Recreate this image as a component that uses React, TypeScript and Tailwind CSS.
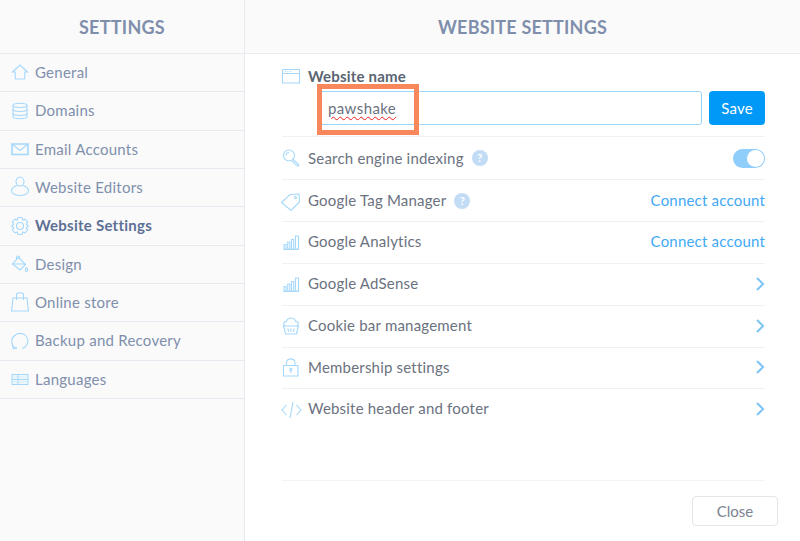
import type { ReactNode } from "react";

const icon = "w-[24px] h-[24px] shrink-0 fill-none stroke-[#a5d8fb] stroke-[1.1]";

const HomeIcon = () => (
  <svg viewBox="0 0 24 24" className={icon}>
    <path d="M4.500 12 12 5l7.500 7h-2.700v7H7.200v-7z" />
  </svg>
);
const DbIcon = () => (
  <svg viewBox="0 0 24 24" className={icon}>
    <path d="M5 6.500c0-3 14-3 14 0v11c0 3-14 3-14 0z" />
    <path d="M5 6.500c0 2.600 14 2.600 14 0M5 10.500c0 2.600 14 2.600 14 0M5 14.500c0 2.600 14 2.600 14 0" />
  </svg>
);
const MailIcon = () => (
  <svg viewBox="0 0 24 24" className={icon}>
    <path d="M4 7h16v10.500H4z" className="stroke-[1.6]" />
    <path d="m4 7 8 6.500L20 7" />
  </svg>
);
const UserIcon = () => (
  <svg viewBox="0 0 24 24" className={icon}>
    <ellipse cx="12" cy="6.500" rx="4" ry="4.500" />
    <path d="M9 10.500c-3 1-5.500 3-5.500 5.500 0 2.500 4.500 4.500 8.500 4.500s8.500-2 8.500-4.500c0-2.500-2.500-4.500-5.500-5.500" />
  </svg>
);
const GearIcon = () => (
  <svg viewBox="0 0 24 24" className={icon}>
    <path d="M10 3.500h4l.8 2.500 2.300-.8 2.500 2.800-1.300 2.200 2 1.800-2 1.800 1.300 2.200-2.500 2.800-2.300-.8-.8 2.500h-4l-.8-2.500-2.300.8-2.500-2.800 1.300-2.200-2-1.800 2-1.800-1.300-2.200 2.500-2.800 2.300.8z" />
    <circle cx="12" cy="12" r="3.500" />
  </svg>
);
const BucketIcon = () => (
  <svg viewBox="0 0 24 24" className={icon}>
    <path d="m10.500 5.500 7 7-5.500 5.500-7.500-6z" />
    <path d="M4.500 12h13M8.500 8V5.500c0-2 3-2 3 0V7" />
    <path d="M18.500 15.500c1 1.200 1.300 1.700 1.300 2.500a1.300 1.300 0 0 1-2.600 0c0-.8.300-1.300 1.300-2.500z" />
  </svg>
);
const BagIcon = () => (
  <svg viewBox="0 0 24 24" className={icon}>
    <path d="M5 8h14l1.500 13h-17z" />
    <path d="M8.500 10V4.500c0-2.400 7-2.400 7 0V10" />
  </svg>
);
const RestoreIcon = () => (
  <svg viewBox="0 0 24 24" className={icon}>
    <path d="M9 19.500c-6-1.500-6.500-9-3-12.500 3.500-3.500 9-3.500 12 0 3.500 4 2 11-4 12.500" />
    <path d="m4.500 16 .8 3.500 3.500-.6" />
  </svg>
);
const LangIcon = () => (
  <svg viewBox="0 0 24 24" className={icon}>
    <path d="M4 7.500h16v10H4zM4 12.500h16M10 7.500v10" />
    <path d="M11 8.500h8v3h-8zM11 13.500h8v3h-8zM5 8.500h4v3H5zM5 13.500h4v3H5z" className="fill-[#e2f3fe] stroke-none" />
  </svg>
);
const WindowIcon = () => (
  <svg viewBox="0 0 24 24" className={icon}>
    <path d="M3.500 5.500h17v13.500h-17zM3.500 9.500h17" />
    <path d="M6 7.500h1M8.500 7.500h1M11 7.500h1" />
  </svg>
);
const SearchIcon = () => (
  <svg viewBox="0 0 24 24" className={icon}>
    <circle cx="10" cy="9.500" r="5.500" />
    <path d="M7 9.500a3 3 0 0 1 3-3M14 13.500l5.500 5c.8 1-.5 2-1.300 1.300l-5.500-5" />
  </svg>
);
const TagIcon = () => (
  <svg viewBox="0 0 24 24" className={icon}>
    <path d="m2.500 13.500 8.500-8 9-.5.500 8-8.500 8.500z" />
    <circle cx="16.500" cy="8.500" r="1" />
  </svg>
);
const BarsIcon = () => (
  <svg viewBox="0 0 24 24" className={icon}>
    <path d="M5 14.500h2v4.500H5zM8.700 12h2.200v7H8.700zM12.500 9.500h2.200V19h-2.200zM16.500 6h3v13h-3zM4.500 19.500h15" />
  </svg>
);
const CookieIcon = () => (
  <svg viewBox="0 0 24 24" className={icon}>
    <path d="M6 12c-2.500-2-1-5 1.500-4.500C8 5 10 4 12 4s4 1 4.500 3.500C19 7 20.500 10 18 12" />
    <path d="M4.500 12h15l-2 8h-11zM9 14.500l.5 3.500M12 14.500V18M15 14.500l-.5 3.500" />
  </svg>
);
const LockIcon = () => (
  <svg viewBox="0 0 24 24" className={icon}>
    <path d="M4.500 10.500h14.500v10.500H4.500z" />
    <path d="M7.500 10.500V7.500a4.300 4.300 0 0 1 8.500 0v3" />
    <circle cx="11.800" cy="14.500" r="1.100" />
    <path d="M11.800 15.600V18" />
  </svg>
);
const CodeIcon = () => (
  <svg viewBox="0 0 24 24" className={icon}>
    <path d="M7.500 8 3 13l4.500 5M17.500 8l4.500 5-4.500 5M14 5l-3 16" />
  </svg>
);
const Chevron = () => (
  <svg viewBox="0 0 10 16" className="w-[10px] h-[16px] fill-none stroke-[#7cc5f5] stroke-[2]">
    <path d="m2 2 6 6-6 6" />
  </svg>
);
const Help = () => (
  <span className="w-[16px] h-[16px] rounded-full bg-[#c3dcf5] text-white text-[11px] font-bold leading-[16px] text-center">?</span>
);
const Connect = () => <span className="text-[15px] text-[#3fa9f5] tracking-[0.2px]">Connect account</span>;

const menu: [ReactNode, string][] = [
  [<HomeIcon />, "General"],
  [<DbIcon />, "Domains"],
  [<MailIcon />, "Email Accounts"],
  [<UserIcon />, "Website Editors"],
  [<GearIcon />, "Website Settings"],
  [<BucketIcon />, "Design"],
  [<BagIcon />, "Online store"],
  [<RestoreIcon />, "Backup and Recovery"],
  [<LangIcon />, "Languages"],
];

const rows: [ReactNode, string, boolean, ReactNode, string][] = [
  [<SearchIcon />, "Search engine indexing", true, (
    <span className="w-[32px] h-[19px] rounded-full bg-[#8fcdfa] flex justify-end items-center pr-[1px]">
      <span className="w-[17px] h-[17px] rounded-full bg-white" />
    </span>
  ), "h-[43px]"],
  [<TagIcon />, "Google Tag Manager", true, <span className="mb-[2px]"><Connect /></span>, "h-[42px]"],
  [<BarsIcon />, "Google Analytics", false, <Connect />, "h-[42px] pb-[2px]"],
  [<BarsIcon />, "Google AdSense", false, <Chevron />, "h-[42px] pb-[2px]"],
  [<CookieIcon />, "Cookie bar management", false, <Chevron />, "h-[42px] pb-[2px]"],
  [<LockIcon />, "Membership settings", false, <Chevron />, "h-[41px] pb-[2px]"],
  [<CodeIcon />, "Website header and footer", false, <Chevron />, "h-[41px] pb-[2px]"],
];

export default function App() {
  return (
    <div className="w-[800px] h-[541px] flex bg-white overflow-hidden font-['Lato',sans-serif]">
      {/* Sidebar */}
      <aside className="w-[245px] h-full shrink-0 bg-[#fafafb] border-r border-[#e6e9ee]">
        <h2 className="h-[54px] flex items-center justify-center border-b border-[#e9ecf1] text-[18px] font-bold text-[#7f8fab] tracking-[0.25px] pt-[1px]">
          SETTINGS
        </h2>
        {menu.map(([ic, label]) => (
          <div
            key={label}
            className={`h-[38.35px] pl-[8px] pb-[1px] flex items-center gap-[3px] border-b border-[#e6eaf0] text-[15px] tracking-[0.25px] ${
              label === "Website Settings" ? "font-bold text-[#5d7095]" : "text-[#7f8fab]"
            }`}
          >
            {ic}
            <span>{label}</span>
          </div>
        ))}
      </aside>

      {/* Main */}
      <main className="flex-1 flex flex-col">
        <h1 className="h-[54px] shrink-0 flex items-center justify-center bg-[#fafafb] border-b border-[#e9ecf1] text-[18px] font-bold text-[#7f8fab] tracking-[0.2px] pt-[1px]">
          WEBSITE SETTINGS
        </h1>
        <div className="ml-[37px] w-[483px] h-[83px] border-b border-[#f0f1f3] relative">
          <div className="flex items-center h-[24px] mt-[10px] -ml-[3px]">
            <div className="w-[29px] flex"><WindowIcon /></div>
            <span className="text-[15px] font-bold text-[#5b6472] tracking-[0.2px]">Website name</span>
          </div>
          <div className="flex gap-[7px] mt-[3px] ml-[36px]">
            <div className="w-[384px] h-[34px] border border-[#9ad5fb] rounded-[3px] flex items-center pl-[9px] text-[15px] text-[#6b7280] tracking-[0.4px]">
              <span className="underline decoration-wavy decoration-[#f02020] decoration-[1px] underline-offset-[2px]">pawshake</span>
            </div>
            <button className="w-[56px] h-[34px] bg-[#0099f7] rounded-[4px] text-white text-[15px] tracking-[0.2px]">Save</button>
          </div>
          {/* Annotation box */}
          <div className="absolute left-[35px] top-[30px] w-[102px] h-[51px] border-[5px] border-[#f9875c]" />
        </div>
        <div className="ml-[37px] w-[483px]">
          {rows.map(([ic, label, help, right, h]) => (
            <div key={label} className={`${h} flex items-center border-b border-[#f0f1f3] last:border-b-0`}>
              <div className="w-[29px] -ml-[3px] flex">{ic}</div>
              <span className="text-[15px] text-[#6b7280] tracking-[0.2px]">{label}</span>
              {help && <span className="ml-[8px] flex"><Help /></span>}
              <span className="ml-auto flex">{right}</span>
            </div>
          ))}
        </div>
        <div className="mt-auto ml-[37px] w-[483px] border-t border-[#f3f4f6]" />
        <div className="h-[60px] pr-[22px] pt-[15px] flex justify-end items-start">
          <button className="w-[86px] h-[30px] border border-[#e2e5ea] rounded-[4px] text-[15px] text-[#7b8290] bg-white">Close</button>
        </div>
      </main>
    </div>
  );
}
